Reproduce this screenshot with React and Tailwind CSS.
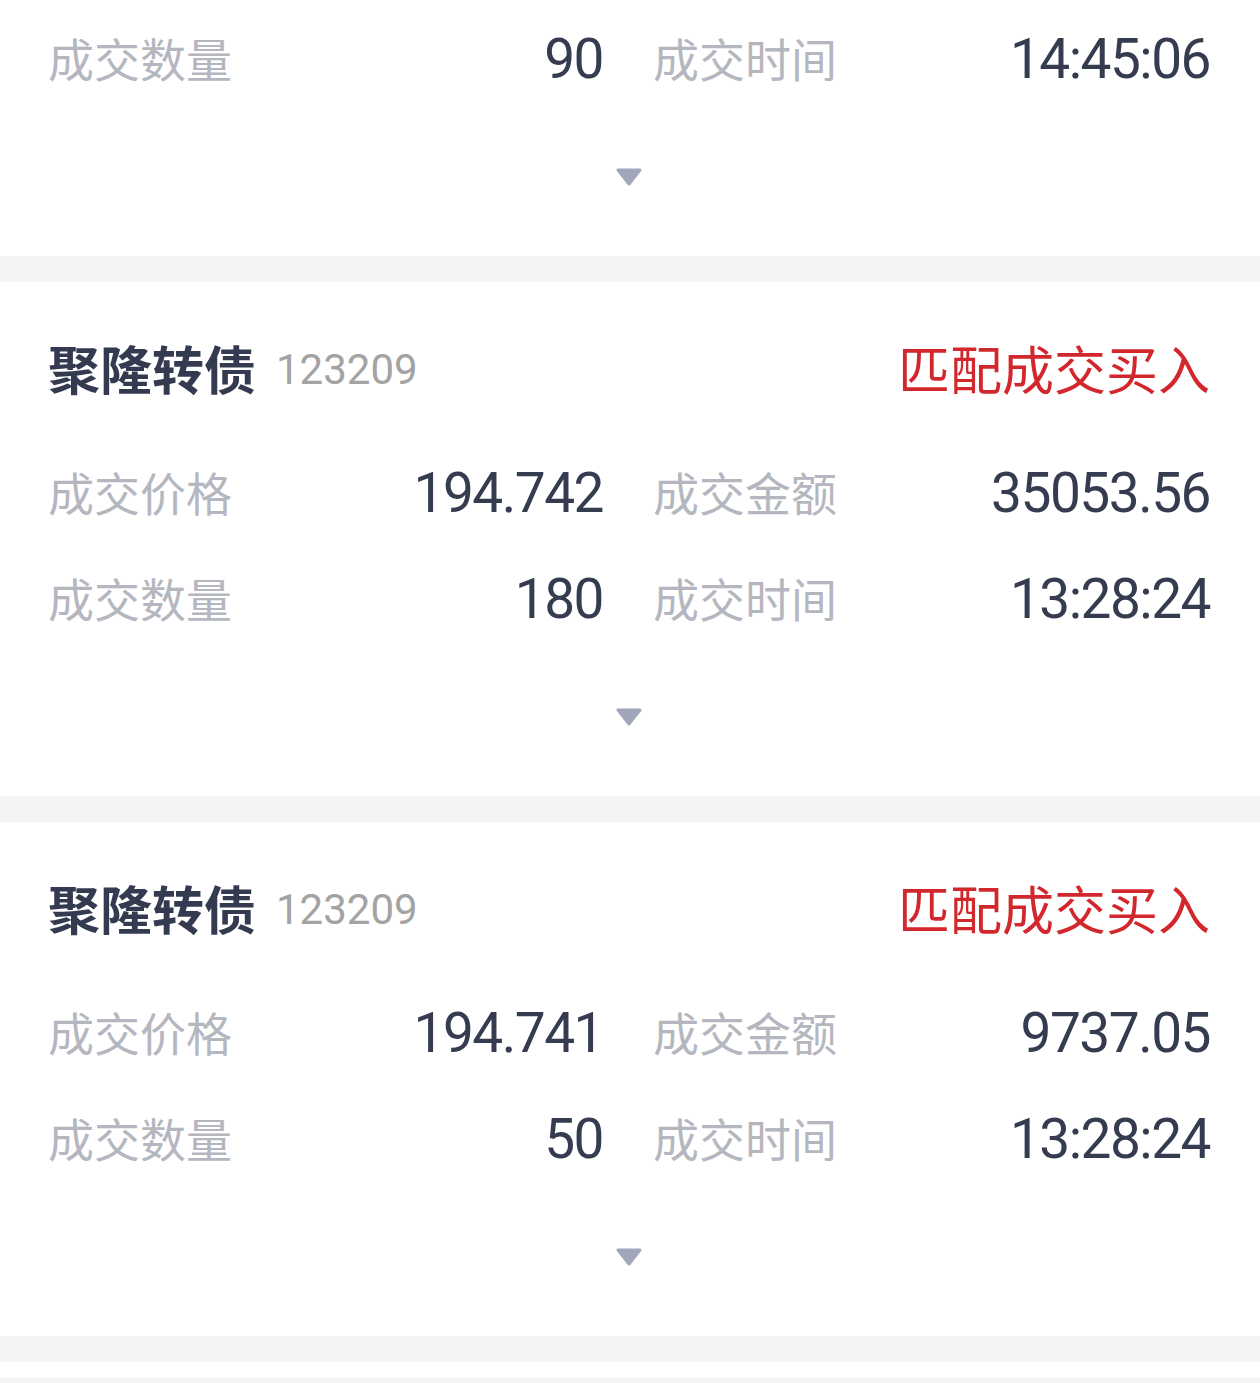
const cjk = "font-['Noto_Sans_CJK_SC',sans-serif]";
const num = "font-['Roboto','Noto_Sans_CJK_SC',sans-serif]";

const trades = [
  { price: '194.742', amount: '35053.56', qty: '180', time: '13:28:24' },
  { price: '194.741', amount: '9737.05', qty: '50', time: '13:28:24' },
];

function Cell({ label, value }) {
  return (
    <div className="flex items-center justify-between h-[106px]">
      <span className={`${cjk} text-[46px] leading-none pb-[4px] text-[#b5b7c0]`}>{label}</span>
      <span className={`${num} text-[55px] leading-none tracking-[-1.5px] text-[#363c50]`}>{value}</span>
    </div>
  );
}

function Caret() {
  return (
    <div className="flex justify-center">
      <svg width="28" height="18" viewBox="0 0 28 18">
        <polygon points="3,2 25,2 14,16" fill="#a0a7ba" stroke="#a0a7ba" strokeWidth="3" strokeLinejoin="round" />
      </svg>
    </div>
  );
}

function Grid({ children }) {
  return <div className="grid grid-cols-[555px_557px] gap-x-[50px]">{children}</div>;
}

function TradeCard({ t }) {
  return (
    <div className="bg-white pl-[48px] pr-[50px] pt-[56px] pb-[70px]">
      <div className="flex items-center justify-between h-[60px]">
        <div className="flex items-center">
          <span className={`${cjk} text-[52px] leading-none font-bold text-[#343a4f]`}>聚隆转债</span>
          <span className={`${num} text-[42px] leading-none text-[#a3a3a3] ml-[20px] pt-[3px]`}>123209</span>
        </div>
        <span className={`${cjk} text-[52px] leading-none text-[#d2282d]`}>匹配成交买入</span>
      </div>
      <div className="mt-[42px]">
        <Grid>
          <Cell label="成交价格" value={t.price} />
          <Cell label="成交金额" value={t.amount} />
          <Cell label="成交数量" value={t.qty} />
          <Cell label="成交时间" value={t.time} />
        </Grid>
      </div>
      <div className="mt-[56px]">
        <Caret />
      </div>
    </div>
  );
}

export default function App() {
  return (
    <div className="w-[1260px] min-h-[1383px] bg-[#f3f4f6]">
      <div className="bg-white pl-[48px] pr-[50px] pt-[6px] pb-[70px]">
        <Grid>
          <Cell label="成交数量" value="90" />
          <Cell label="成交时间" value="14:45:06" />
        </Grid>
        <div className="mt-[56px]">
          <Caret />
        </div>
      </div>
      {trades.map((t, i) => (
        <div key={i} className="pt-[26px]">
          <TradeCard t={t} />
        </div>
      ))}
      <div className="h-[26px]" />
      <div className="h-[16px] bg-white" />
    </div>
  );
}
